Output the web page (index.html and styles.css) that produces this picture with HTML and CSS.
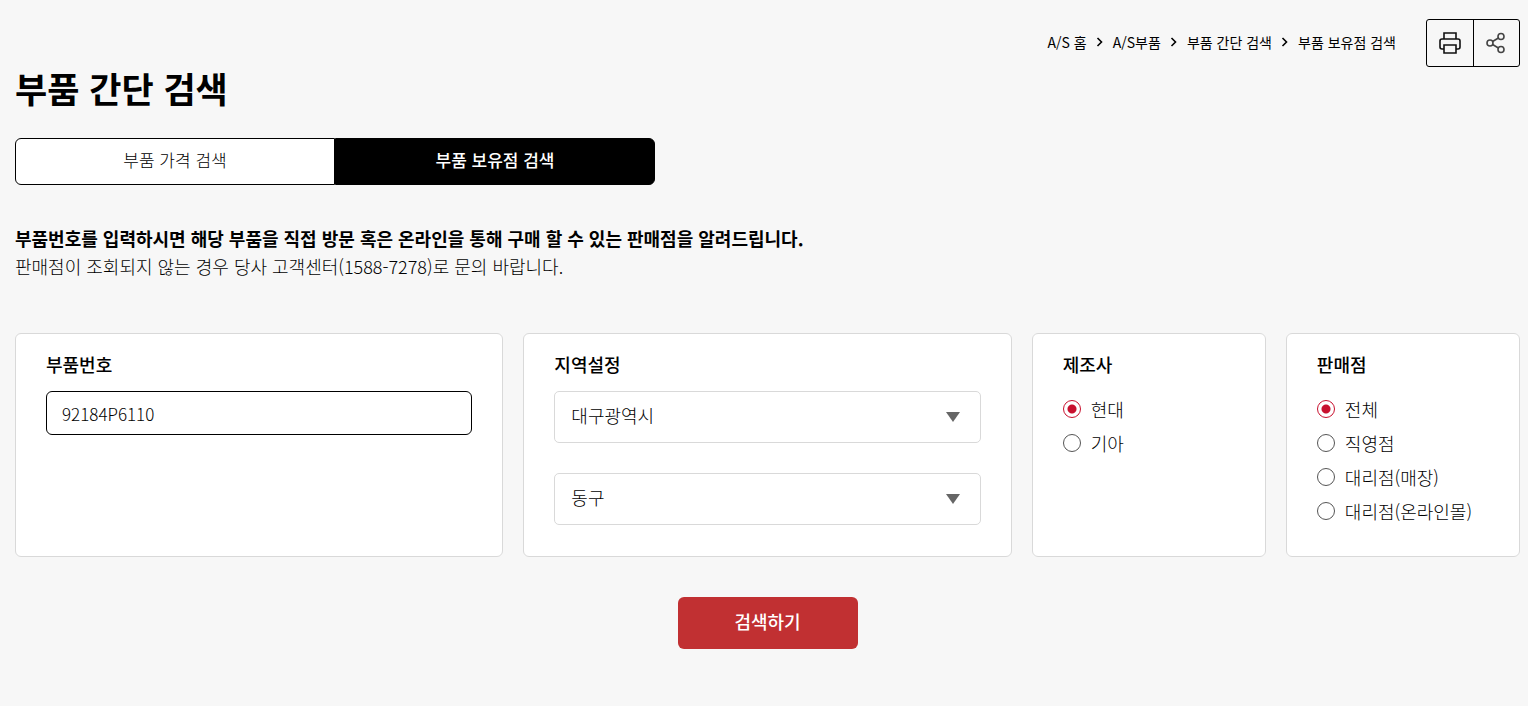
FILE: index.html
```html
<!DOCTYPE html>
<html lang="ko">
<head>
<meta charset="utf-8">
<meta name="viewport" content="width=device-width, initial-scale=1">
<title>부품 간단 검색</title>
<link rel="stylesheet" href="styles.css">
</head>
<body>
<header class="topbar">
  <nav aria-label="현재 위치">
    <ol class="breadcrumb">
      <li><a href="#">A/S 홈</a></li>
      <li><svg class="chevron" viewBox="0 0 6 10" aria-hidden="true"><path d="M1 1l4 4-4 4"/></svg><a href="#">A/S부품</a></li>
      <li><svg class="chevron" viewBox="0 0 6 10" aria-hidden="true"><path d="M1 1l4 4-4 4"/></svg><a href="#">부품 간단 검색</a></li>
      <li><svg class="chevron" viewBox="0 0 6 10" aria-hidden="true"><path d="M1 1l4 4-4 4"/></svg><a href="#" aria-current="page">부품 보유점 검색</a></li>
    </ol>
  </nav>
  <div class="tools">
    <button class="tool" type="button" aria-label="인쇄">
      <svg class="icon" viewBox="0 0 24 24" aria-hidden="true"><path d="M6 8V2h12v6M6 18H4a2 2 0 0 1-2-2v-6a2 2 0 0 1 2-2h16a2 2 0 0 1 2 2v6a2 2 0 0 1-2 2h-2M6 14h12v8H6z"/></svg>
    </button>
    <button class="tool tool-share" type="button" aria-label="공유">
      <svg class="icon" viewBox="0 0 24 24" aria-hidden="true"><circle cx="5" cy="12" r="3"/><circle cx="16" cy="5.500" r="3"/><circle cx="16" cy="18.500" r="3"/><path d="M7.600 10.500l5.800-3.500M7.600 13.500l5.800 3.500"/></svg>
    </button>
  </div>
</header>
<main>
  <h1 class="title">부품 간단 검색</h1>
  <div class="tabs" role="tablist">
    <button class="tab" type="button" role="tab" aria-selected="false">부품 가격 검색</button>
    <button class="tab tab-active" type="button" role="tab" aria-selected="true">부품 보유점 검색</button>
  </div>
  <p class="intro"><strong>부품번호를 입력하시면 해당 부품을 직접 방문 혹은 온라인을 통해 구매 할 수 있는 판매점을 알려드립니다.</strong><br>판매점이 조회되지 않는 경우 당사 고객센터(1588-7278)로 문의 바랍니다.</p>
  <form>
    <div class="cards">
      <section class="card card-wide">
        <label class="label" for="part-number">부품번호</label>
        <input class="text-field" id="part-number" type="text" value="92184P6110">
      </section>
      <section class="card card-wide">
        <label class="label" for="city">지역설정</label>
        <div class="selects">
          <select class="select" id="city"><option>대구광역시</option></select>
          <select class="select" aria-label="구/군"><option>동구</option></select>
        </div>
      </section>
      <fieldset class="card">
        <legend class="label">제조사</legend>
        <div class="options">
          <label class="option"><input class="radio" type="radio" name="maker" checked>현대</label>
          <label class="option"><input class="radio" type="radio" name="maker">기아</label>
        </div>
      </fieldset>
      <fieldset class="card">
        <legend class="label">판매점</legend>
        <div class="options">
          <label class="option"><input class="radio" type="radio" name="store" checked>전체</label>
          <label class="option"><input class="radio" type="radio" name="store">직영점</label>
          <label class="option"><input class="radio" type="radio" name="store">대리점(매장)</label>
          <label class="option"><input class="radio" type="radio" name="store">대리점(온라인몰)</label>
        </div>
      </fieldset>
    </div>
    <div class="actions"><button class="submit" type="button">검색하기</button></div>
  </form>
</main>
</body>
</html>
```
FILE: styles.css
```css
* {
  box-sizing: border-box;
}

body {
  margin: 0;
  padding: 19px 8px 40px 15px;
  background: #f7f7f7;
  color: #000;
  font-family: "Noto Sans CJK KR", sans-serif;
  font-size: 18px;
  font-weight: 300;
  line-height: 28px;
}

button,
input,
select {
  font: inherit;
  color: inherit;
}

button {
  cursor: pointer;
}

.topbar {
  display: flex;
  justify-content: flex-end;
  align-items: center;
  gap: 30px;
}

.breadcrumb {
  display: flex;
  gap: 9px;
  margin: 0;
  padding: 0 0 2px;
  list-style: none;
  font-size: 14px;
  font-weight: 400;
  line-height: 20px;
}

.breadcrumb li {
  display: flex;
  align-items: center;
  gap: 10px;
}

.breadcrumb a {
  color: inherit;
  text-decoration: none;
}

.chevron {
  width: 7px;
  height: 10px;
  fill: none;
  stroke: #000;
  stroke-width: 1.6;
}

.tools {
  display: flex;
  border: 1px solid #000;
  border-radius: 3px;
}

.tool {
  display: grid;
  place-items: center;
  width: 46px;
  height: 46px;
  padding: 0;
  border: 0;
  background: transparent;
}

.tool-share {
  border-left: 1px solid #000;
}

.icon {
  width: 24px;
  height: 24px;
  fill: none;
  stroke: #111;
  stroke-width: 1.6;
}

.tool-share .icon {
  stroke: #444;
}

.title {
  margin: 0;
  font-size: 35px;
  font-weight: 700;
  line-height: 42px;
}

.tabs {
  display: flex;
  max-width: 640px;
  margin-top: 29px;
}

.tab {
  flex: 1;
  height: 47px;
  padding: 0 0 3px;
  border: 1px solid #000;
  border-radius: 6px 0 0 6px;
  background: #fff;
  font-size: 17px;
  font-weight: 300;
}

.tab-active {
  border-radius: 0 6px 6px 0;
  background: #000;
  color: #fff;
  font-weight: 500;
}

.intro {
  margin: 39px 0 53px;
}

.intro strong {
  font-weight: 700;
}

.cards {
  display: grid;
  grid-template-columns: repeat(6, minmax(0, 1fr));
  gap: 20px;
}

.card {
  min-width: 0;
  margin: 0;
  padding: 16px 30px 31px;
  border: 1px solid #d9d9d9;
  border-radius: 6px;
  background: #fff;
}

.card-wide {
  grid-column: span 2;
}

.label {
  display: block;
  float: left;
  width: 100%;
  margin-bottom: 13px;
  padding: 0;
  font-weight: 500;
}

.text-field {
  clear: both;
  display: block;
  width: 100%;
  height: 44px;
  padding: 0 15px;
  border: 1px solid #000;
  border-radius: 6px;
  background: #fff;
  font-size: 17px;
}

.selects {
  clear: both;
  display: grid;
  gap: 30px;
}

.select {
  appearance: none;
  width: 100%;
  height: 52px;
  padding: 0 40px 5px 16px;
  border: 1px solid #d9d9d9;
  border-radius: 5px;
  background: #fff url("data:image/svg+xml,%3Csvg xmlns='http://www.w3.org/2000/svg' width='14' height='10'%3E%3Cpath d='M0 0h14l-7 10z' fill='%23666'/%3E%3C/svg%3E") no-repeat right 20px center;
}

.options {
  clear: both;
  display: grid;
  gap: 6px;
  padding-top: 4px;
}

.option {
  display: flex;
  align-items: center;
  gap: 10px;
}

.radio {
  appearance: none;
  flex: none;
  width: 18px;
  height: 18px;
  margin: 0;
  border: 1px solid #555;
  border-radius: 50%;
  background: #fff;
}

.radio:checked {
  border-color: #c8102e;
  background: radial-gradient(circle, #c8102e 4px, #fff 5px);
}

.actions {
  display: flex;
  justify-content: center;
  margin-top: 40px;
}

.submit {
  width: 180px;
  height: 52px;
  padding: 0 0 5px;
  border: 0;
  border-radius: 6px;
  background: #c13032;
  color: #fff;
  font-weight: 500;
}
```
